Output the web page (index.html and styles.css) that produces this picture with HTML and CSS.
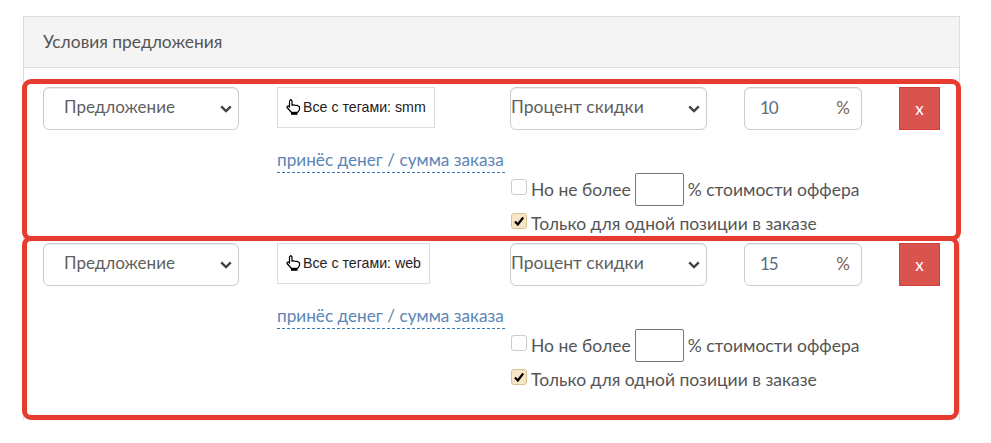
FILE: index.html
```html
<!DOCTYPE html>
<html lang="ru">
<head>
<meta charset="utf-8">
<title>Условия предложения</title>
<link rel="stylesheet" href="styles.css">
</head>
<body>
<section class="panel">
  <header class="panel-head">Условия предложения</header>
  <div class="rows">
    <div class="row row-first">
      <select class="control sel sel-offer"><option>Предложение</option></select>
      <div class="col-tag">
        <div class="tag"><svg class="hand" viewBox="0 0 15 16" width="15" height="16"><path d="M3.5 2 4.7.5 6 2v4.2l2-.4 1.5.7 1.6-.2 2.4 1.4v3l-2 2.8H5.5L1 8.5l.3-1.3 1-.4 1.2 1.4z" fill="#fff" stroke="#000" stroke-width="1.2" stroke-linejoin="round"/><rect x="5" y="12.8" width="6.5" height="3" fill="#000"/></svg><span>Все с тегами: smm</span></div>
        <a class="money" href="#">принёс денег / сумма заказа</a>
      </div>
      <div class="col-disc">
        <select class="control sel sel-disc"><option>Процент скидки</option></select>
        <label class="check check-max"><input type="checkbox"><span>Но не более</span><input class="small" type="text"><span>% стоимости оффера</span></label>
        <label class="check"><input type="checkbox" checked><span>Только для одной позиции в заказе</span></label>
      </div>
      <div class="control pct"><span class="val">10</span><span class="unit">%</span></div>
      <button class="del">x</button>
    </div>
    <div class="row row-second">
      <select class="control sel sel-offer"><option>Предложение</option></select>
      <div class="col-tag">
        <div class="tag"><svg class="hand" viewBox="0 0 15 16" width="15" height="16"><path d="M3.5 2 4.7.5 6 2v4.2l2-.4 1.5.7 1.6-.2 2.4 1.4v3l-2 2.8H5.5L1 8.5l.3-1.3 1-.4 1.2 1.4z" fill="#fff" stroke="#000" stroke-width="1.2" stroke-linejoin="round"/><rect x="5" y="12.8" width="6.5" height="3" fill="#000"/></svg><span>Все с тегами: web</span></div>
        <a class="money" href="#">принёс денег / сумма заказа</a>
      </div>
      <div class="col-disc">
        <select class="control sel sel-disc"><option>Процент скидки</option></select>
        <label class="check check-max"><input type="checkbox"><span>Но не более</span><input class="small" type="text"><span>% стоимости оффера</span></label>
        <label class="check"><input type="checkbox" checked><span>Только для одной позиции в заказе</span></label>
      </div>
      <div class="control pct"><span class="val">15</span><span class="unit">%</span></div>
      <button class="del">x</button>
    </div>
  </div>
</section>
</body>
</html>
```
FILE: styles.css
```css
* { box-sizing: border-box; }
html, body { margin: 0; padding: 0; background: #fff; }
body {
  width: 991px;
  height: 443px;
  overflow: hidden;
  padding: 16px 31px 0 23px;
  font-family: "Lato", "Open Sans", sans-serif;
  font-size: 17px;
  color: #555;
}
.panel {
  border: 1px solid #ddd;
  border-bottom: 0;
  height: 404px;
}
.panel-head {
  height: 51px;
  background: #f4f4f4;
  border-bottom: 1px solid #ddd;
  padding: 0 19px;
  line-height: 50px;
  font-size: 17.4px;
  color: #555;
}
.rows { margin: 11px -2px 0 -2px; }
.row {
  display: flex;
  align-items: flex-start;
  border: 5px solid #e63b2f;
  border-radius: 9px;
  padding: 3px 0 0 16px;
}
.row-first { height: 162px; }
.row-second { height: 184px; margin: -5px 2px 0 0; padding-top: 2px; }
.control {
  height: 43px;
  border: 1px solid #ccc;
  border-radius: 6px;
  background-color: #fff;
  font-family: inherit;
  font-size: 17px;
  color: #5f5f5f;
}
.sel {
  display: block;
  appearance: none;
  -webkit-appearance: none;
  padding-bottom: 4px;
  background-image: url("data:image/svg+xml;utf8,<svg xmlns='http://www.w3.org/2000/svg' width='12' height='8' viewBox='0 0 12 8'><path d='M1.2 1.4 6 6l4.8-4.6' fill='none' stroke='%23444' stroke-width='2.4'/></svg>");
  background-repeat: no-repeat;
  background-position: right 6px center;
  box-shadow: inset 0 1px 1px rgba(0,0,0,.075);
}
.sel-offer { width: 196px; padding-left: 20px; flex: none; }
.sel-disc { width: 197px; padding-left: 0; font-size: 17.5px; }
.col-tag { width: 233px; margin-left: 38px; flex: none; }
.tag {
  display: inline-flex;
  align-items: center;
  height: 41px;
  padding: 0 8px 2px 8px;
  border: 1px solid #ddd;
  font-family: "Liberation Sans", sans-serif;
  font-size: 14.2px;
  color: #222;
}
.hand { margin-right: 2px; flex: none; }
.money {
  display: block;
  width: 228px;
  margin-top: 21px;
  height: 24px;
  border-bottom: 1px dashed #337ab7;
  color: #5b85b5;
  text-decoration: none;
  font-size: 17.2px;
  line-height: 22px;
  white-space: nowrap;
}
.col-disc { width: 234px; flex: none; }
.check { display: flex; align-items: center; white-space: nowrap; color: #555; font-size: 17.5px; height: 34px; }
.check span { margin-bottom: 2px; flex: none; }
.check input[type=checkbox] {
  appearance: none;
  -webkit-appearance: none;
  flex: none;
  width: 16px;
  height: 16px;
  margin: -6px 4px 0 1px;
  border: 1px solid #ccc;
  border-radius: 3px;
  background: #fff center / 12px 12px no-repeat;
}
.check input[type=checkbox]:checked {
  border-color: #d6c193;
  background-color: #f7e7c6;
  background-image: url("data:image/svg+xml;utf8,<svg xmlns='http://www.w3.org/2000/svg' viewBox='0 0 12 12'><path d='M2 6.5 4.8 9.5 10.2 2.5' fill='none' stroke='%23000' stroke-width='2.2'/></svg>");
}
.check-max { margin-top: 43px; }
.check .small {
  flex: none;
  width: 49px;
  height: 33px;
  margin: 0 4px 1px 4px;
  border: 1px solid #777;
  border-radius: 2px;
  background: #fff;
}
.pct {
  width: 118px;
  flex: none;
  display: flex;
  align-items: center;
  justify-content: space-between;
  padding: 0 11px 2px 15px;
  box-shadow: inset 0 1px 1px rgba(0,0,0,.075);
}
.unit { color: #7a6255; }
.val { color: #5a6d80; letter-spacing: -1px; }
.del {
  width: 41px;
  height: 43px;
  margin-left: 37px;
  flex: none;
  border: 1px solid #d43f3a;
  background: #d9534f;
  color: #fff;
  font-family: inherit;
  font-size: 17px;
  padding: 0;
}
```
